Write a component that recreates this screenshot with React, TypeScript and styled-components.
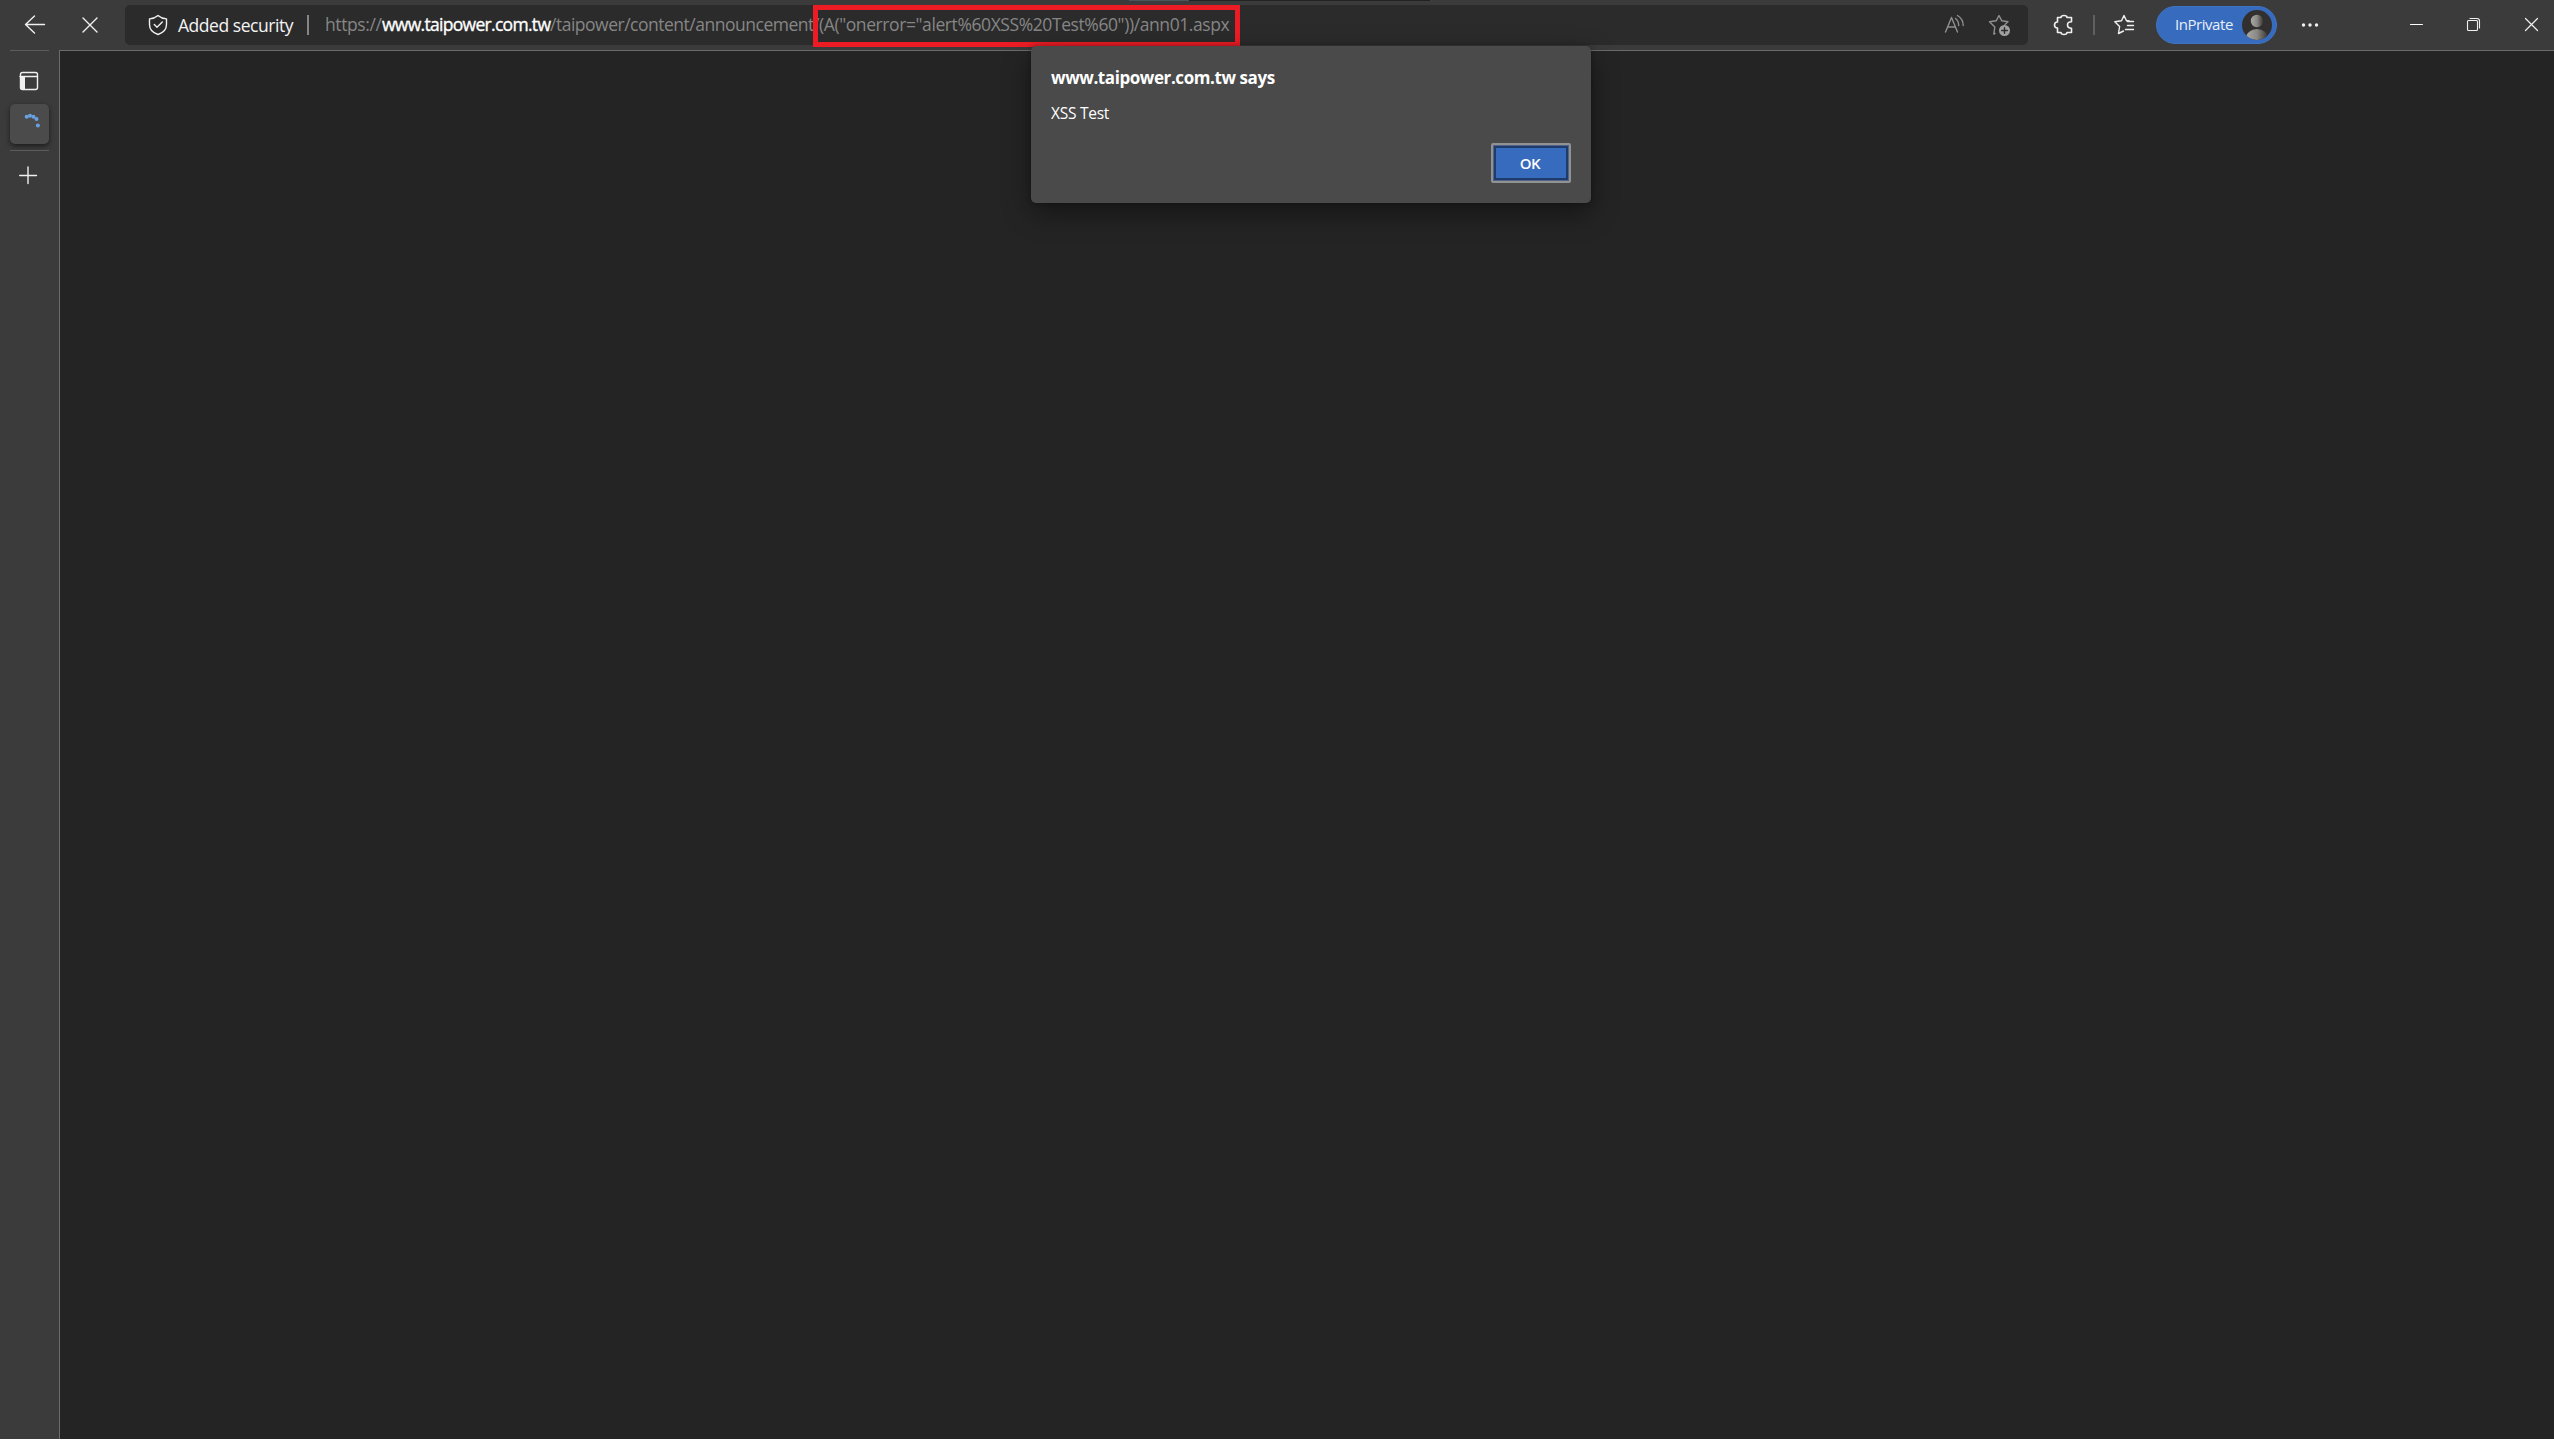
import React from "react";
import styled, { createGlobalStyle } from "styled-components";

const Global = createGlobalStyle`
  * { box-sizing: border-box; }
  html, body, #root { margin: 0; height: 100%; }
  body { overflow: hidden; background: #fff; font-family: "Open Sans", "Noto Sans", sans-serif; }
`;

const Window = styled.div`
  position: relative;
  width: 2554px;
  height: 1439px;
  display: flex;
  flex-direction: column;
  background: #3b3b3b;
`;
const TopEdge = styled.div`
  position: absolute;
  top: 0;
  left: 1129px;
  width: 301px;
  height: 1px;
  background: linear-gradient(90deg, #4c545e 60px, #222 60px);
`;
const Toolbar = styled.header`
  height: 50px;
  flex: none;
  display: flex;
  align-items: flex-start;
`;
const NavButtons = styled.div`
  width: 125px;
  height: 50px;
  display: flex;
`;
const IconBox = styled.span<{ $w: number; $h?: number }>`
  flex: none;
  width: ${(p) => p.$w}px;
  height: ${(p) => p.$h ?? 50}px;
  svg { display: block; }
`;
const AddressBar = styled.div`
  width: 1903px;
  height: 40px;
  margin-top: 5px;
  display: flex;
  background: #2b2b2b;
  border-radius: 5px;
`;
const Segment = styled.span<{ $w: number; $ls: number; $color?: string; $stroke?: number; $lh?: number }>`
  display: block;
  flex: none;
  width: ${(p) => p.$w}px;
  font-size: 17.5px;
  line-height: ${(p) => p.$lh ?? 38}px;
  white-space: pre;
  letter-spacing: ${(p) => p.$ls}px;
  color: ${(p) => p.$color ?? "#868686"};
  -webkit-text-stroke: ${(p) => p.$stroke ?? 0}px currentColor;
`;
const Divider = styled.i<{ $left: number; $right: number; $top: number; $w: number; $color: string }>`
  flex: none;
  width: ${(p) => p.$w}px;
  height: 20px;
  margin: ${(p) => p.$top}px ${(p) => p.$right}px 0 ${(p) => p.$left}px;
  background: ${(p) => p.$color};
`;
const Marked = styled.span`
  position: relative;
  flex: none;
  width: 416px;
`;
const RedFrame = styled.i`
  position: absolute;
  left: 0;
  top: 0;
  width: 427px;
  height: 42px;
  border: 5px solid #ed1c24;
`;
const BarSpacer = styled.span`
  flex: 1;
`;
const Profile = styled.div`
  flex: none;
  width: 121px;
  height: 38px;
  margin: 6px 0 0 6px;
  padding: 3px 4px 0 18px;
  display: flex;
  justify-content: space-between;
  border-radius: 19px;
  background: #366bbd;
  border: 1px solid #3f73c2;
`;
const ProfileName = styled.span`
  font-size: 15px;
  line-height: 29px;
  letter-spacing: -0.45px;
  color: #e9effa;
`;
const Body = styled.div`
  flex: 1;
  display: flex;
`;
const Side = styled.aside`
  width: 59px;
  display: flex;
  flex-direction: column;
  padding-left: 10px;
`;
const SideRule = styled.i`
  width: 39px;
  height: 1px;
  background: #5c5c5c;
`;
const Tab = styled.div`
  width: 39px;
  height: 40px;
  margin-bottom: 6px;
  border-radius: 5px;
  background: #4b4b4b;
  box-shadow: 0 2px 5px rgba(0, 0, 0, 0.55);
`;
const Page = styled.main`
  flex: 1;
  background: #242424;
  border-left: 1px solid #6b6b6b;
  border-top: 1px solid #6b6b6b;
`;
const Dialog = styled.section`
  position: absolute;
  left: 1031px;
  top: 46px;
  width: 560px;
  height: 157px;
  padding: 20px 20px 0 20px;
  display: flex;
  flex-direction: column;
  border-radius: 5px;
  background: #4a4a4a;
  box-shadow: 0 10px 28px rgba(0, 0, 0, 0.42), 0 0 5px rgba(0, 0, 0, 0.3);
  color: #fff;
`;
const Title = styled.h1`
  margin: 0;
  font-size: 17px;
  line-height: 24px;
  font-weight: 700;
  letter-spacing: -0.42px;
`;
const Message = styled.p`
  margin: 12px 0 0;
  font-size: 15.5px;
  line-height: 22px;
  letter-spacing: -0.25px;
`;
const OkButton = styled.button`
  align-self: flex-end;
  width: 80px;
  height: 40px;
  margin-top: 19px;
  padding: 0 2px 0 0;
  border: 2px solid #929292;
  border-radius: 2px;
  box-shadow: inset 0 0 0 1px #4f6488, inset 0 0 0 3px #1f3b6c;
  background: #366bbd;
  color: #fff;
  font: 600 15px/34px "Open Sans", sans-serif;
  letter-spacing: -0.5px;
`;

type G = { w: number; h?: number; x?: number; y?: number; children: React.ReactNode; color?: string; sw?: number };
const Glyph = ({ w, h = 50, x = 0, y = 0, children, color = "#f0f0f0", sw = 1.4 }: G) => (
  <IconBox $w={w} $h={h}>
    <svg width={w} height={h} viewBox={`${x} ${y} ${w} ${h}`} fill="none" stroke={color} strokeWidth={sw} strokeLinecap="round" strokeLinejoin="round">
      {children}
    </svg>
  </IconBox>
);

export default function App() {
  return (
    <>
      <Global />
      <Window>
        <Toolbar>
          <NavButtons>
            <Glyph w={70}><path d="M44.5 24.5H26M34.5 16L25.5 24.5L34.5 33" /></Glyph>
            <Glyph w={55} x={70}><path d="M83 18L97 32M97 18L83 32" /></Glyph>
          </NavButtons>
          <AddressBar>
            <Glyph w={53} h={40} x={125} y={5}>
              <path d="M158 15.5C160.5 17.7 163.3 18.7 166.5 18.9V24.5C166.5 29.5 163.5 32.7 158 34.5C152.500 32.7 149.500 29.500 149.500 24.500V18.900C152.700 18.700 155.500 17.700 158 15.500Z" />
              <path d="M154.300 24.500L157 27.200L162.300 22" />
            </Glyph>
            <Segment $w={117} $ls={-0.46} $color="#f4f4f4" $lh={40}>Added security</Segment>
            <Divider $left={12} $right={16} $top={10} $w={2} $color="#858585" />
            <Segment $w={57} $ls={-0.4}>https://</Segment>
            <Segment $w={168} $ls={-0.7} $color="#fff" $stroke={0.35}>www.taipower.com.tw</Segment>
            <Segment $w={263} $ls={-0.49}>/taipower/content/announcement</Segment>
            <Marked>
              <Segment $w={416} $ls={-0.41}>{'/(A("onerror="alert%60XSS%20Test%60"))/ann01.aspx'}</Segment>
              <RedFrame />
            </Marked>
            <BarSpacer />
            <Glyph w={42} h={40} x={1944} y={5} color="#909090">
              <path d="M1945.500 32L1951.500 17.500L1957.500 32M1947.800 27H1955.300M1955.500 18.500Q1958.700 21 1958.700 25.500M1957.500 15.500Q1963.200 19 1963.200 25.500" />
            </Glyph>
            <Glyph w={42} h={40} x={1986} y={5} color="#909090">
              <path d="M1995 33.500L1993.800 34L1994.800 27L1989.500 21.800L1996.200 20.800L1999 15.500L2001.800 20.800L2008 21.800L2005 24.500" />
              <circle cx="2004.500" cy="30.500" r="5.500" fill="#a0a0a0" stroke="none" />
              <path d="M2004.500 27.700V33.300M2001.700 30.500H2007.300" stroke="#2b2b2b" />
            </Glyph>
          </AddressBar>
          <Glyph w={65} x={2028} sw={1.6}>
            <path d="M2057.500 17.500H2061Q2061 15.500 2064 15.500Q2067 15.500 2067 17.500H2071.500V21.800Q2067.500 21.800 2067.500 25Q2067.500 28.200 2071.500 28.200V32.500H2067Q2067 34.500 2064 34.500Q2061 34.500 2061 32.500H2057.500V28Q2054.500 28 2054.500 25Q2054.500 22 2057.500 22Z" />
          </Glyph>
          <Divider $left={0} $right={0} $top={15} $w={2} $color="#606060" />
          <Glyph w={55} x={2095}>
            <path d="M2129 20.800H2126.500L2124 15.500L2121.500 20.800L2114.800 21.800L2119.600 26.500L2118.500 33.500L2123.500 31M2127.500 21.500H2133.500M2127.500 25.500H2133.500M2125.500 29.500H2133.500" />
          </Glyph>
          <Profile>
            <ProfileName>InPrivate</ProfileName>
            <svg width="30" height="30" viewBox="0 0 30 30">
              <defs>
                <linearGradient id="person"><stop stopColor="#aaa8a4" /><stop offset=".5" stopColor="#8b8986" /><stop offset="1" stopColor="#383633" /></linearGradient>
                <clipPath id="round"><circle cx="15" cy="15" r="15" /></clipPath>
              </defs>
              <circle cx="15" cy="15" r="15" fill="#31302e" />
              <g clipPath="url(#round)" fill="url(#person)"><circle cx="15" cy="11" r="6.200" /><ellipse cx="15" cy="28" rx="11" ry="9" /></g>
            </svg>
          </Profile>
          <Glyph w={127} x={2277}>
            <g fill="#f0f0f0" stroke="none"><circle cx="2303.500" cy="25" r="1.700" /><circle cx="2310" cy="25" r="1.700" /><circle cx="2316.500" cy="25" r="1.700" /></g>
          </Glyph>
          <Glyph w={56} x={2404} sw={1}><path d="M2410.500 24.500H2422.500" stroke="#fff" /></Glyph>
          <Glyph w={56} x={2460} sw={1.100}><rect x="2467.500" y="20.500" width="10" height="10" rx="1" /><path d="M2470 18.500H2477Q2479.500 18.500 2479.500 21V28" /></Glyph>
          <Glyph w={38} x={2516} sw={1.200}><path d="M2525.500 18.500L2537.500 30.500M2537.500 18.500L2525.500 30.500" /></Glyph>
        </Toolbar>
        <Body>
          <Side>
            <SideRule />
            <Glyph w={39} h={53} x={10} y={51}>
              <rect x="20.500" y="72.500" width="17" height="17" rx="2" />
              <path d="M20 76.500H37" />
              <path d="M21 77H25V89H21Z" fill="#f0f0f0" stroke="none" />
            </Glyph>
            <Tab>
              <Glyph w={39} h={40} x={10} y={104}>
                <g fill="#69a1e0" stroke="none"><circle cx="26.700" cy="116.700" r="2" /><circle cx="30" cy="115.800" r="2" /><circle cx="33.500" cy="116.700" r="2" /><circle cx="36.500" cy="119" r="2" /><circle cx="37.900" cy="125.600" r="2" /></g>
              </Glyph>
            </Tab>
            <SideRule />
            <Glyph w={39} h={50} x={10} y={151}><path d="M28 167V183.500M19.700 175.500H36.500" /></Glyph>
          </Side>
          <Page />
        </Body>
        <Dialog>
          <Title>www.taipower.com.tw says</Title>
          <Message>XSS Test</Message>
          <OkButton>OK</OkButton>
        </Dialog>
        <TopEdge />
      </Window>
    </>
  );
}
